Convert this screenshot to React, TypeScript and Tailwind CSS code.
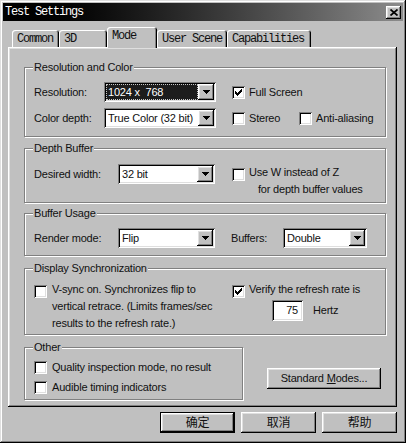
import React from "react";

const raised =
  "shadow-[inset_-1px_-1px_0_#000,inset_1px_1px_0_#fff,inset_-2px_-2px_0_#808080,inset_2px_2px_0_#dfdfdf]";
const sunken =
  "shadow-[inset_1px_1px_0_#808080,inset_-1px_-1px_0_#fff,inset_2px_2px_0_#000,inset_-2px_-2px_0_#dfdfdf]";

function Check({ on = false }: { on?: boolean }) {
  return (
    <span className={`w-[13px] h-[13px] bg-white shrink-0 flex items-center justify-center ${sunken}`}>
      {on && (
        <svg width="7" height="7" viewBox="0 0 7 7" shapeRendering="crispEdges">
          <path
            d="M0 2h1v3h-1zM1 3h1v3h-1zM2 4h1v3h-1zM3 3h1v3h-1zM4 2h1v3h-1zM5 1h1v3h-1zM6 0h1v3h-1z"
            fill="#000"
          />
        </svg>
      )}
    </span>
  );
}

function DropBtn() {
  return (
    <span className={`w-[16px] h-[16px] bg-[#c0c0c0] shrink-0 flex items-center justify-center ${raised}`}>
      <svg width="7" height="4" viewBox="0 0 7 4" shapeRendering="crispEdges">
        <path d="M0 0h7v1h-1v1h-1v1h-1v1h-1v-1h-1v-1h-1v-1h-1z" fill="#000" />
      </svg>
    </span>
  );
}

function Combo({ value, className, focused = false }: { value: string; className: string; focused?: boolean }) {
  return (
    <div className={`h-[20px] bg-white flex items-center p-[2px] shrink-0 ${sunken} ${className}`}>
      <div
        className={`flex-1 h-full flex items-center pl-[2px] whitespace-pre ${
          focused ? "bg-[#1c1c1c] text-white outline outline-1 outline-dotted outline-[#c8c8c8] -outline-offset-1" : ""
        }`}
      >
        {value}
      </div>
      <DropBtn />
    </div>
  );
}

function Group({ title, className, children }: { title: string; className: string; children: React.ReactNode }) {
  return (
    <div className={`relative border border-[#808080] shadow-[1px_1px_0_#fff,inset_1px_1px_0_#fff] ${className}`}>
      <span className="absolute -top-[7px] left-[8px] bg-[#c0c0c0] px-[1px] leading-[13px]">{title}</span>
      {children}
    </div>
  );
}

function Tab({ label, active = false, className }: { label: string; active?: boolean; className: string }) {
  return (
    <div
      className={`rounded-t-[3px] bg-[#c0c0c0] pl-[5px] flex items-center font-['Liberation_Mono',monospace] text-[12px] tracking-[-1.2px] shadow-[inset_1px_1px_0_#fff,inset_-1px_0_0_#000,inset_-2px_0_0_#808080] ${
        active ? "h-[21px] -mb-[1px] relative z-10 pb-[3px]" : "h-[17px]"
      } ${className}`}
    >
      {label}
    </div>
  );
}

export default function App() {
  return (
    <div className="w-[406px] h-[443px] bg-[#c0c0c0] p-[3px] flex flex-col text-[11px] tracking-[-0.2px] text-[#111] font-['Liberation_Sans','Noto_Sans_CJK_SC',sans-serif] shadow-[inset_-1px_-1px_0_#000,inset_1px_1px_0_#dfdfdf,inset_-2px_-2px_0_#808080,inset_2px_2px_0_#fff]">
      {/* title bar */}
      <div className="h-[18px] flex items-center bg-gradient-to-r from-[#000] to-[#8c8c8c] pl-[2px] pr-[2px]">
        <span className="flex-1 text-white font-['Liberation_Mono',monospace] text-[12px] tracking-[-1.2px]">Test Settings</span>
        <span className={`w-[15px] h-[13px] bg-[#c0c0c0] flex items-center justify-center ${raised}`}>
          <svg width="8" height="7" viewBox="0 0 8 7">
            <path d="M0.5 0.5L7.5 6.5M7.5 0.5L0.5 6.5" stroke="#000" strokeWidth="1.7" />
          </svg>
        </span>
      </div>

      {/* tabs */}
      <div className="mt-[7px] ml-[9px] h-[19px] flex items-end">
        <Tab label="Common" className="w-[47px]" />
        <Tab label="3D" className="w-[48px]" />
        <Tab label="Mode" active className="w-[50px]" />
        <Tab label="User Scene" className="w-[70px]" />
        <Tab label="Capabilities" className="w-[84px]" />
      </div>

      {/* panel */}
      <div className={`ml-[5px] w-[389px] h-[360px] pl-[16px] flex flex-col ${raised}`}>
        <Group title="Resolution and Color" className="mt-[20px] w-[362px] h-[70px] pt-[14px] pl-[9px] flex flex-col gap-[6px]">
          <div className="h-[20px] flex items-center">
            <span className="w-[70px]">Resolution:</span>
            <Combo value="1024 x  768" className="w-[112px]" focused />
            <div className="ml-[16px] flex items-center gap-[4px]">
              <Check on />
              <span>Full Screen</span>
            </div>
          </div>
          <div className="h-[20px] flex items-center">
            <span className="w-[70px]">Color depth:</span>
            <Combo value="True Color (32 bit)" className="w-[112px]" />
            <div className="ml-[16px] w-[67px] flex items-center gap-[4px]">
              <Check />
              <span>Stereo</span>
            </div>
            <div className="flex items-center gap-[4px]">
              <Check />
              <span>Anti-aliasing</span>
            </div>
          </div>
        </Group>

        <Group title="Depth Buffer" className="mt-[11px] w-[362px] h-[55px] pt-[15px] pl-[9px] flex items-start">
          <span className="w-[84px] h-[20px] flex items-center">Desired width:</span>
          <Combo value="32 bit" className="w-[97px]" />
          <div className="ml-[17px] flex items-start gap-[4px]">
            <span className="mt-[4px]">
              <Check />
            </span>
            <div className="leading-[17px]">
              <div>Use W instead of Z</div>
              <div className="ml-[9px]">for depth buffer values</div>
            </div>
          </div>
        </Group>

        <Group title="Buffer Usage" className="mt-[10px] w-[362px] h-[43px] pt-[14px] pl-[9px]">
          <div className="h-[20px] flex items-center">
            <span className="w-[84px]">Render mode:</span>
            <Combo value="Flip" className="w-[97px]" />
            <span className="ml-[16px] w-[52px]">Buffers:</span>
            <Combo value="Double" className="w-[84px]" />
          </div>
        </Group>

        <Group title="Display Synchronization" className="mt-[12px] w-[362px] h-[67px] pt-[12px] pl-[9px] flex items-start">
          <div className="w-[198px] flex items-start gap-[5px]">
            <span className="mt-[4px]">
              <Check />
            </span>
            <div className="leading-[17px]">
              V-sync on. Synchronizes flip to
              <br />
              vertical retrace. (Limits frames/sec
              <br />
              results to the refresh rate.)
            </div>
          </div>
          <div className="flex flex-col">
            <div className="flex items-start gap-[4px]">
              <span className="mt-[4px]">
                <Check on />
              </span>
              <span className="leading-[17px]">Verify the refresh rate is</span>
            </div>
            <div className="mt-[2px] ml-[40px] flex items-center">
              <span className={`w-[31px] h-[21px] bg-white flex items-center justify-end pr-[5px] ${sunken}`}>75</span>
              <span className="ml-[10px]">Hertz</span>
            </div>
          </div>
        </Group>

        <div className="mt-[12px] flex items-start">
          <Group title="Other" className="w-[219px] h-[53px] pt-[9px] pl-[9px] flex flex-col">
            <div className="h-[20px] flex items-center gap-[5px]">
              <Check />
              <span>Quality inspection mode, no result</span>
            </div>
            <div className="h-[20px] flex items-center gap-[5px]">
              <Check />
              <span>Audible timing indicators</span>
            </div>
          </Group>
          <button className={`ml-[24px] mt-[21px] w-[114px] h-[21px] bg-[#c0c0c0] flex items-center justify-center ${raised}`}>
            Standard <span className="underline ml-[3px]">M</span>odes...
          </button>
        </div>
      </div>

      {/* dialog buttons */}
      <div className="mt-[5px] pr-[6px] flex justify-end gap-[6px] text-[12px]">
        <button className={`w-[75px] h-[21px] border border-black bg-[#c0c0c0] flex items-center justify-center ${raised}`}>
          确定
        </button>
        <button className={`w-[75px] h-[21px] bg-[#c0c0c0] flex items-center justify-center ${raised}`}>取消</button>
        <button className={`w-[75px] h-[21px] bg-[#c0c0c0] flex items-center justify-center ${raised}`}>帮助</button>
      </div>
    </div>
  );
}
